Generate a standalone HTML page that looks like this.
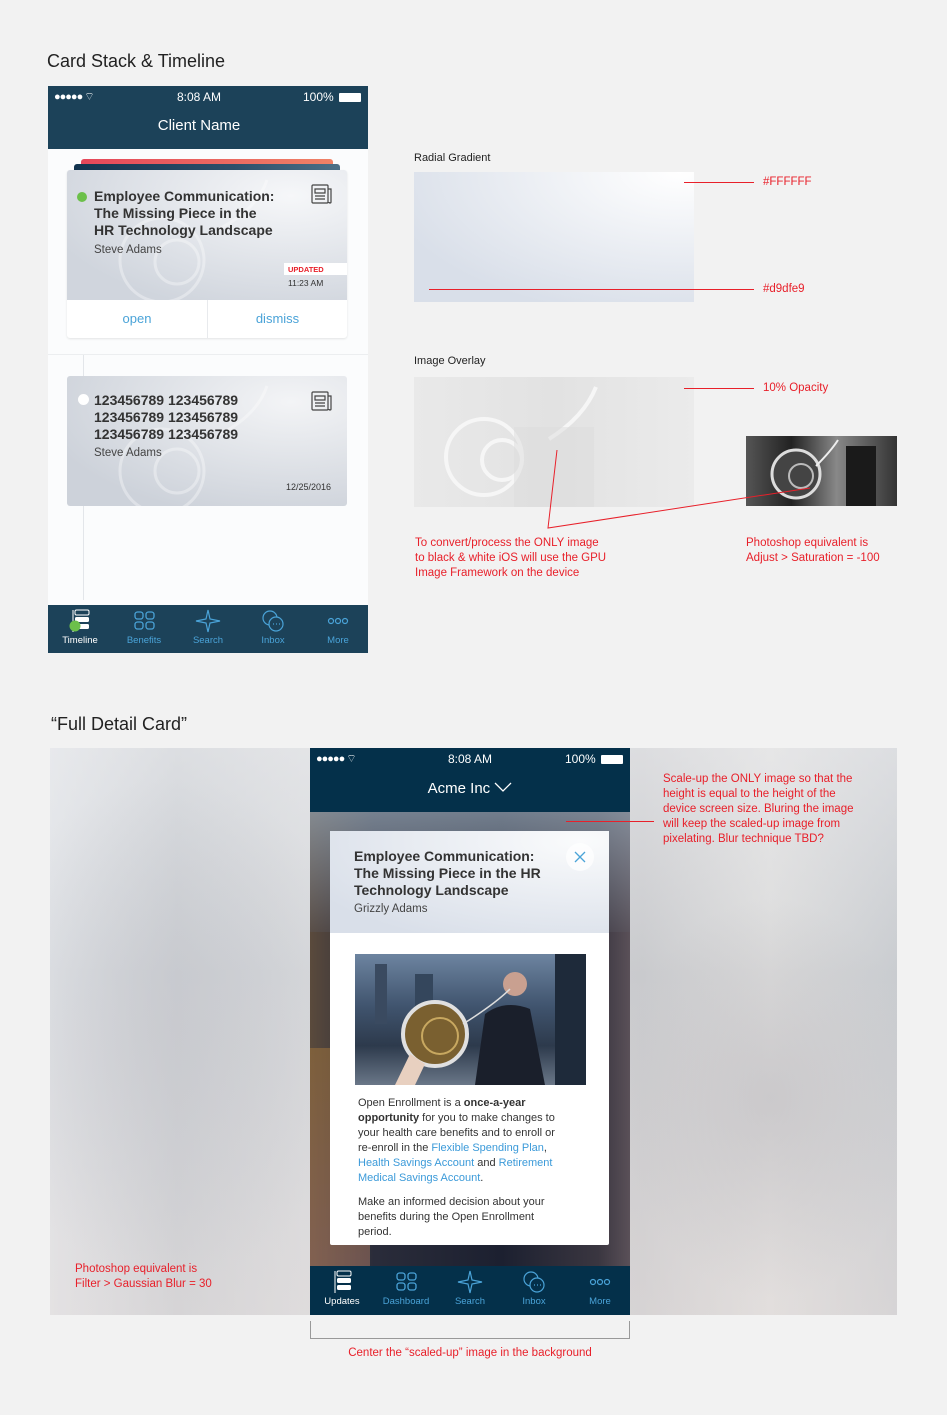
<!DOCTYPE html>
<html><head><meta charset="utf-8"><style>
*{margin:0;padding:0;box-sizing:border-box}
body{width:947px;height:1415px;background:#f2f2f2;font-family:"Liberation Sans",sans-serif;position:relative;overflow:hidden;color:#333}
.a{position:absolute}
.red{color:#e8202a;font-size:11.5px;line-height:15px}
.rl{position:absolute;background:#e8202a;height:1px}
.tab{position:absolute;width:64px;text-align:center;font-size:9.5px;color:#4aa3d8}
.tab svg{display:block;margin:0 auto 2px}
.blue{color:#3b9ad9}
</style></head><body>

<div class="a" style="left:47px;top:51px;font-size:18px;color:#222">Card Stack &amp; Timeline</div>

<div class="a" style="left:48px;top:86px;width:320px;height:567px;background:#fbfcfd;overflow:hidden">
  <div class="a" style="left:0;top:0;width:320px;height:63px;background:#1c4259"></div>
  <div class="a" style="left:6px;top:4px;color:#fff;font-size:11px;letter-spacing:-1px">●●●●● <span style="letter-spacing:0">⌔</span></div>
  <div class="a" style="left:0;top:4px;width:302px;text-align:center;color:#fff;font-size:12px">8:08 AM</div>
  <div class="a" style="left:255px;top:4px;color:#fff;font-size:12px">100%</div>
  <div class="a" style="left:291px;top:7px;width:22px;height:9px;background:#fff;border-radius:1px"></div>
  <div class="a" style="left:0;top:31px;width:302px;text-align:center;color:#fff;font-size:15px">Client Name</div>

  <div class="a" style="left:35px;top:269px;width:1px;height:245px;background:#e3e6ea"></div>

  <div class="a" style="left:33px;top:73px;width:252px;height:6px;background:linear-gradient(90deg,#e5475a,#ef8266);border-radius:3px 3px 0 0"></div>
  <div class="a" style="left:26px;top:78px;width:266px;height:7px;background:linear-gradient(90deg,#12344f,#2c4f6a 60%,#4c7087);border-radius:3px 3px 0 0"></div>
  <div class="a" style="left:19px;top:84px;width:280px;height:168px;background:#fff;border-radius:3px;box-shadow:0 1px 2px rgba(0,0,0,.1)">
    <div class="a" style="left:0;top:0;width:280px;height:130px;background:radial-gradient(ellipse at 80% 20%,#f6f7f9,#d0d5dd 80%);border-radius:3px 3px 0 0;overflow:hidden">
      <svg class="a" style="left:0;top:0" width="280" height="130"><g fill="none" stroke="#fff" stroke-opacity=".35" stroke-width="3"><circle cx="95" cy="90" r="42"/><circle cx="110" cy="92" r="22"/><path d="M150 60 Q190 40 200 10"/></g></svg>
    </div>
    <div class="a" style="left:10px;top:22px;width:10px;height:10px;border-radius:5px;background:#6cc04a"></div>
    <div class="a" style="left:27px;top:18px;font-size:14px;font-weight:bold;line-height:17px;color:#333">Employee Communication:<br>The Missing Piece in the<br>HR Technology Landscape</div>
    <div class="a" style="left:27px;top:74px;font-size:11.5px;color:#444">Steve Adams</div>
    <svg class="a" style="left:244px;top:14px" width="22" height="20" fill="none" stroke="#444" stroke-width="1.2"><rect x="1" y="1" width="16" height="18" rx="1"/><path d="M17 5h3v13a1 1 0 0 1-2 0M4 5h10v4H4zM4 12h10M4 15h10"/></svg>
    <div class="a" style="left:217px;top:93px;width:63px;height:12px;background:#fff;font-size:7.5px;font-weight:bold;color:#e8202a;padding:2px 0 0 4px">UPDATED</div>
    <div class="a" style="left:221px;top:108px;font-size:8.5px;color:#333">11:23 AM</div>
    <div class="a" style="left:0;top:130px;width:140px;height:38px;line-height:38px;text-align:center;font-size:13px;color:#4aa3d8">open</div>
    <div class="a" style="left:140px;top:130px;width:1px;height:38px;background:#e8eaed"></div>
    <div class="a" style="left:141px;top:130px;width:139px;height:38px;line-height:38px;text-align:center;font-size:13px;color:#4aa3d8">dismiss</div>
  </div>
  <div class="a" style="left:0;top:268px;width:320px;height:1px;background:#eceef0"></div>

  <div class="a" style="left:19px;top:290px;width:280px;height:130px;background:radial-gradient(ellipse at 80% 20%,#f3f4f6,#cdd2da 80%);border-radius:3px;overflow:hidden">
    <svg class="a" style="left:0;top:0" width="280" height="130"><g fill="none" stroke="#fff" stroke-opacity=".35" stroke-width="3"><circle cx="95" cy="95" r="42"/><circle cx="110" cy="95" r="22"/><path d="M150 60 Q190 40 200 10"/></g></svg>
    <div class="a" style="left:11px;top:18px;width:11px;height:11px;border-radius:6px;background:#fff"></div>
    <div class="a" style="left:27px;top:16px;font-size:14px;font-weight:bold;line-height:17px;color:#333">123456789 123456789<br>123456789 123456789<br>123456789 123456789</div>
    <div class="a" style="left:27px;top:71px;font-size:11.5px;color:#444">Steve Adams</div>
    <svg class="a" style="left:244px;top:15px" width="22" height="20" fill="none" stroke="#444" stroke-width="1.2"><rect x="1" y="1" width="16" height="18" rx="1"/><path d="M17 5h3v13a1 1 0 0 1-2 0M4 5h10v4H4zM4 12h10M4 15h10"/></svg>
    <div class="a" style="left:219px;top:106px;font-size:9px;color:#333">12/25/2016</div>
  </div>

  <div class="a" style="left:0;top:519px;width:320px;height:48px;background:#1c4259"></div>
  <div class="tab" style="left:0;top:523px;color:#fff"><svg width="26" height="24" fill="#fff"><rect x="8" y="1" width="14" height="5" rx="1.5" fill="none" stroke="#fff"/><rect x="8" y="8" width="14" height="5" rx="1.5"/><rect x="8" y="15" width="14" height="5" rx="1.5"/><path d="M6 1v22" stroke="#fff"/><circle cx="8" cy="17" r="5.5" fill="#6cc04a"/></svg>Timeline</div>
  <div class="tab" style="left:64px;top:523px"><svg width="26" height="24" fill="none" stroke="#4aa3d8" stroke-width="1.3"><rect x="4" y="3" width="8" height="7" rx="2.5"/><rect x="15" y="3" width="8" height="7" rx="2.5"/><rect x="4" y="13" width="8" height="7" rx="2.5"/><rect x="15" y="13" width="8" height="7" rx="2.5"/></svg>Benefits</div>
  <div class="tab" style="left:128px;top:523px"><svg width="26" height="24" fill="none" stroke="#4aa3d8" stroke-width="1.2"><path d="M13 1 L15 10 L25 12 L15 14 L13 23 L11 14 L1 12 L11 10Z"/></svg>Search</div>
  <div class="tab" style="left:193px;top:523px"><svg width="26" height="24" fill="none" stroke="#4aa3d8" stroke-width="1.2"><circle cx="10" cy="9" r="7"/><circle cx="16" cy="15" r="7" fill="#1c4259"/><path d="M13 15h1M16 15h1M19 15h1"/></svg>Inbox</div>
  <div class="tab" style="left:258px;top:523px"><svg width="26" height="24" fill="none" stroke="#4aa3d8" stroke-width="1.2"><circle cx="6" cy="12" r="2.5"/><circle cx="13" cy="12" r="2.5"/><circle cx="20" cy="12" r="2.5"/></svg>More</div>
</div>

<div class="a" style="left:414px;top:152px;font-size:11px;color:#222">Radial Gradient</div>
<div class="a" style="left:414px;top:172px;width:280px;height:130px;background:radial-gradient(ellipse at 95% 0%,#ffffff,#d9dfe9 80%)"></div>
<div class="rl" style="left:684px;top:182px;width:70px"></div>
<div class="a red" style="left:763px;top:175px">#FFFFFF</div>
<div class="rl" style="left:429px;top:289px;width:325px"></div>
<div class="a red" style="left:763px;top:282px">#d9dfe9</div>

<div class="a" style="left:414px;top:355px;font-size:11px;color:#222">Image Overlay</div>
<div class="a" style="left:414px;top:377px;width:280px;height:130px;background:linear-gradient(90deg,#e9e9e9,#e2e2e2 50%,#ebebeb);overflow:hidden">
  <svg width="280" height="130"><g fill="none" stroke="#f6f6f6" stroke-width="4"><circle cx="70" cy="80" r="38"/><circle cx="88" cy="83" r="20"/><path d="M135 62 Q170 40 182 10"/></g><rect x="100" y="50" width="80" height="80" fill="#dcdcdc" opacity=".5"/></svg>
</div>
<div class="rl" style="left:684px;top:388px;width:70px"></div>
<div class="a red" style="left:763px;top:381px">10% Opacity</div>
<div class="a" style="left:746px;top:436px;width:151px;height:70px;background:linear-gradient(90deg,#555,#222 30%,#888 60%,#333);overflow:hidden">
  <svg width="151" height="70"><circle cx="50" cy="38" r="24" fill="#444" stroke="#ddd" stroke-width="3"/><circle cx="55" cy="40" r="12" fill="none" stroke="#bbb" stroke-width="2"/><path d="M70 30 Q85 15 92 4" stroke="#eee" stroke-width="2" fill="none"/><rect x="100" y="10" width="30" height="60" fill="#1a1a1a"/></svg>
</div>
<svg class="a" style="left:540px;top:440px" width="280" height="100"><path d="M17 10 L8 88 L270 48" stroke="#e8202a" fill="none"/></svg>
<div class="a red" style="left:415px;top:536px">To convert/process the ONLY image<br>to black &amp; white iOS will use the GPU<br>Image Framework on the device</div>
<div class="a red" style="left:746px;top:536px">Photoshop equivalent is<br>Adjust &gt; Saturation = -100</div>

<div class="a" style="left:51px;top:714px;font-size:18px;color:#222">“Full Detail Card”</div>

<div class="a" style="left:50px;top:748px;width:847px;height:567px;background:linear-gradient(90deg,#dfe2e6,#c8ccd1 15%,#d6d8db 30%,#c9cacd 70%,#dcdcdc 85%,#c9ccd0);overflow:hidden">
  <div class="a" style="left:0;top:0;width:847px;height:567px;background:radial-gradient(ellipse 200px 250px at 120px 280px,rgba(200,200,205,.6),transparent),radial-gradient(ellipse 150px 200px at 720px 350px,rgba(190,188,192,.6),transparent),linear-gradient(180deg,rgba(240,240,242,.5),transparent 40%,rgba(235,225,222,.4))"></div>
</div>
<div class="a red" style="left:75px;top:1262px">Photoshop equivalent is<br>Filter &gt; Gaussian Blur = 30</div>
<div class="a red" style="left:663px;top:772px">Scale-up the ONLY image so that the<br>height is equal to the height of the<br>device screen size. Bluring the image<br>will keep the scaled-up image from<br>pixelating. Blur technique TBD?</div>

<div class="a" style="left:310px;top:748px;width:320px;height:567px;overflow:hidden;background:linear-gradient(90deg,#5a4a3c,#2a2c3a 20%,#1c2030 60%,#3a3640 90%,#5a5058)">
  <div class="a" style="left:0;top:64px;width:320px;height:120px;background:linear-gradient(180deg,rgba(150,165,180,.7),rgba(90,90,100,.3))"></div>
  <div class="a" style="left:0;top:300px;width:60px;height:260px;background:linear-gradient(180deg,rgba(150,110,60,.6),rgba(170,120,110,.5))"></div>
  <div class="a" style="left:0;top:0;width:320px;height:64px;background:#04304a"></div>
  <div class="a" style="left:6px;top:4px;color:#fff;font-size:11px;letter-spacing:-1px">●●●●● <span style="letter-spacing:0">⌔</span></div>
  <div class="a" style="left:0;top:4px;width:320px;text-align:center;color:#fff;font-size:12px">8:08 AM</div>
  <div class="a" style="left:255px;top:4px;color:#fff;font-size:12px">100%</div>
  <div class="a" style="left:291px;top:7px;width:22px;height:9px;background:#fff;border-radius:1px"></div>
  <div class="a" style="left:0;top:32px;width:320px;text-align:center;color:#fff;font-size:15px">Acme Inc <svg width="18" height="10" style="vertical-align:1px" fill="none" stroke="#fff" stroke-width="1.3"><path d="M1 1l8 8 8-8"/></svg></div>

  <div class="a" style="left:20px;top:83px;width:279px;height:414px;background:#fff;border-radius:2px">
    <div class="a" style="left:0;top:0;width:279px;height:102px;background:radial-gradient(ellipse at 90% 10%,#fafbfc,#d9dfe9 85%)"></div>
    <div class="a" style="left:236px;top:12px;width:28px;height:28px;border-radius:14px;background:rgba(255,255,255,.7)"></div>
    <svg class="a" style="left:244px;top:20px" width="12" height="12" stroke="#4aa3d8" stroke-width="1.3"><path d="M1 1l10 10M11 1L1 11"/></svg>
    <div class="a" style="left:24px;top:17px;font-size:14px;font-weight:bold;line-height:17px;color:#333">Employee Communication:<br>The Missing Piece in the HR<br>Technology Landscape</div>
    <div class="a" style="left:24px;top:72px;font-size:11.5px;color:#444">Grizzly Adams</div>
    <div class="a" style="left:25px;top:123px;width:231px;height:131px;background:linear-gradient(180deg,#6d84a0,#40546e 40%,#2d3a4c 70%,#6a7788);overflow:hidden">
      <svg width="231" height="131"><rect x="20" y="10" width="12" height="60" fill="#3a4a60"/><rect x="60" y="20" width="18" height="50" fill="#34465c"/><rect x="200" y="0" width="31" height="131" fill="#1e2a3a"/><path d="M120 131 L130 60 Q150 45 175 55 L190 131Z" fill="#1a1f2b"/><circle cx="160" cy="30" r="12" fill="#c9a090"/><circle cx="80" cy="80" r="32" fill="#7a6030" stroke="#e0e0e0" stroke-width="4"/><circle cx="85" cy="82" r="18" fill="none" stroke="#c8a860" stroke-width="2"/><path d="M40 131 L55 100 L70 110 L60 131Z" fill="#e8d0c0"/><path d="M108 70 Q140 50 155 35" stroke="#ddd" fill="none" stroke-width="1.5"/></svg>
    </div>
    <div class="a" style="left:28px;top:265px;width:250px;font-size:11px;line-height:15px;color:#333;white-space:nowrap">Open Enrollment is a <b>once-a-year</b><br><b>opportunity</b> for you to make changes to<br>your health care benefits and to enroll or<br>re-enroll in the <span class="blue">Flexible Spending Plan</span>,<br><span class="blue">Health Savings Account</span> and <span class="blue">Retirement</span><br><span class="blue">Medical Savings Account</span>.<br><span style="display:block;height:9px"></span>Make an informed decision about your<br>benefits during the Open Enrollment<br>period.</div>
  </div>

  <div class="a" style="left:0;top:518px;width:320px;height:49px;background:#04304a"></div>
  <div class="tab" style="left:0;top:522px;color:#fff"><svg width="26" height="24" fill="#fff"><rect x="8" y="1" width="14" height="5" rx="1.5" fill="none" stroke="#fff"/><rect x="8" y="8" width="14" height="5" rx="1.5"/><rect x="8" y="15" width="14" height="5" rx="1.5"/><path d="M6 1v22" stroke="#fff"/></svg>Updates</div>
  <div class="tab" style="left:64px;top:522px"><svg width="26" height="24" fill="none" stroke="#4aa3d8" stroke-width="1.3"><rect x="4" y="3" width="8" height="7" rx="2.5"/><rect x="15" y="3" width="8" height="7" rx="2.5"/><rect x="4" y="13" width="8" height="7" rx="2.5"/><rect x="15" y="13" width="8" height="7" rx="2.5"/></svg>Dashboard</div>
  <div class="tab" style="left:128px;top:522px"><svg width="26" height="24" fill="none" stroke="#4aa3d8" stroke-width="1.2"><path d="M13 1 L15 10 L25 12 L15 14 L13 23 L11 14 L1 12 L11 10Z"/></svg>Search</div>
  <div class="tab" style="left:192px;top:522px"><svg width="26" height="24" fill="none" stroke="#4aa3d8" stroke-width="1.2"><circle cx="10" cy="9" r="7"/><circle cx="16" cy="15" r="7" fill="#04304a"/><path d="M13 15h1M16 15h1M19 15h1"/></svg>Inbox</div>
  <div class="tab" style="left:258px;top:522px"><svg width="26" height="24" fill="none" stroke="#4aa3d8" stroke-width="1.2"><circle cx="6" cy="12" r="2.5"/><circle cx="13" cy="12" r="2.5"/><circle cx="20" cy="12" r="2.5"/></svg>More</div>
</div>
<div class="rl" style="left:566px;top:821px;width:88px"></div>

<div class="a" style="left:310px;top:1321px;width:320px;height:18px;border:1px solid #999;border-top:none"></div>
<div class="a red" style="left:310px;top:1346px;width:320px;text-align:center">Center the “scaled-up” image in the background</div>
</body></html>
